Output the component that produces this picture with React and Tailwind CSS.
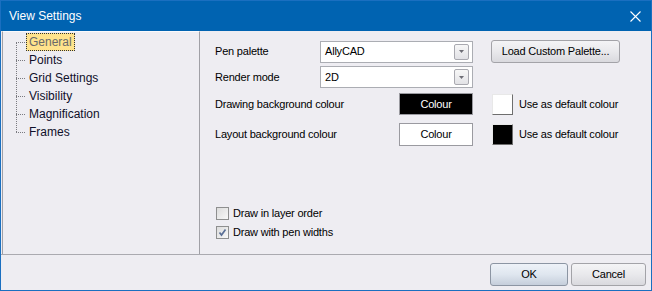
import React from 'react';

const treeItems = ['General', 'Points', 'Grid Settings', 'Visibility', 'Magnification', 'Frames'];

function Combo({ value }) {
  return (
    <div className="w-[153px] h-[22px] bg-white border border-[#abadb3] flex items-center pl-[4px] pr-[3px]">
      <span className="flex-1">{value}</span>
      <div className="w-[15px] h-[16px] rounded-[2px] border border-[#a9a9b0] bg-gradient-to-b from-[#f7f7f7] to-[#e2e2e6] flex items-center justify-center">
        <svg width="5" height="3" viewBox="0 0 5 3">
          <path d="M0 0h5L2.5 3z" fill="#6d6d75" />
        </svg>
      </div>
    </div>
  );
}

function Button({ children, className = '' }) {
  return (
    <div className={`h-[23px] rounded-[3px] border border-[#a3a3a8] bg-gradient-to-b from-[#f4f4f6] via-[#e9e9ec] to-[#d9d9de] flex items-center justify-center ${className}`}>
      {children}
    </div>
  );
}

function Swatch({ color }) {
  return (
    <div className={`w-[21px] h-[21px] border border-t-[#e8e8e8] border-l-[#e8e8e8] border-r-[#6e6e6e] border-b-[#6e6e6e] ${color}`} />
  );
}

function Checkbox({ checked, label }) {
  return (
    <div className="flex items-center h-[19px]">
      <div className="w-[13px] h-[13px] border border-[#8e8f8f] bg-gradient-to-br from-[#dcdcdc] to-[#f8f8f8] flex items-center justify-center">
        {checked && (
          <svg width="9" height="9" viewBox="0 0 9 9">
            <path d="M1.5 4.5l2 2.5 4-5.5" stroke="#5a6f96" strokeWidth="1.7" fill="none" />
          </svg>
        )}
      </div>
      <span className="ml-[4px]">{label}</span>
    </div>
  );
}

export default function App() {
  return (
    <div
      className="w-[652px] h-[291px] border border-[#1a6fc0] bg-[#eeedf2] flex flex-col text-[11px] tracking-[-0.2px] text-black"
      style={{ fontFamily: '"Liberation Sans", Arial, sans-serif' }}
    >
      {/* title bar */}
      <div className="h-[30px] bg-[#0063b1] flex items-center pl-[8px] pr-[10px] text-white text-[12px] tracking-normal">
        <span className="flex-1">View Settings</span>
        <svg width="11" height="11" viewBox="0 0 11 11">
          <path d="M0.5 0.5l10 10M10.5 0.5l-10 10" stroke="#fff" strokeWidth="1.1" />
        </svg>
      </div>

      <div className="flex h-[224px] border-b border-[#aaaab0]">
        {/* tree */}
        <div className="ml-[1px] w-[198px] border-l border-r border-[#a0a0a6] border-t border-t-[#fafafc] pt-[1px] text-[12px] tracking-normal">
          <div className="relative">
            <div className="absolute left-[13px] top-[9px] h-[90px] border-l border-dotted border-[#7a7a80]" />
            {treeItems.map((item, i) => (
              <div key={item} className="flex items-center h-[18px]">
                <span className="ml-[13px] w-[9px] border-t border-dotted border-[#7a7a80]" />
                <span
                  className={
                    i === 0
                      ? 'ml-[1px] h-[18px] px-[2px] flex items-center bg-[#ffe38c] border border-dotted border-[#333] text-[#6a6a6a]'
                      : 'ml-[4px] text-[#10102a]'
                  }
                >
                  {item}
                </span>
              </div>
            ))}
          </div>
        </div>

        {/* settings */}
        <div className="flex-1 flex flex-col pl-[15px] pt-[9px]">
          <div className="flex items-center">
            <span className="w-[105px]">Pen palette</span>
            <Combo value="AllyCAD" />
            <Button className="ml-[18px] w-[129px]">Load Custom Palette...</Button>
          </div>
          <div className="flex items-center mt-[3px]">
            <span className="w-[105px]">Render mode</span>
            <Combo value="2D" />
          </div>
          <div className="flex items-center mt-[5px]">
            <span className="w-[184px]">Drawing background colour</span>
            <div className="w-[74px] h-[22px] bg-black border border-[#9a9aa0] text-white flex items-center justify-center">Colour</div>
            <div className="ml-[19px]"><Swatch color="bg-white" /></div>
            <span className="ml-[6px]">Use as default colour</span>
          </div>
          <div className="flex items-center mt-[8px]">
            <span className="w-[184px]">Layout background colour</span>
            <div className="w-[74px] h-[23px] bg-white border border-[#9a9aa0] flex items-center justify-center">Colour</div>
            <div className="ml-[19px]"><Swatch color="bg-black" /></div>
            <span className="ml-[6px]">Use as default colour</span>
          </div>
          <div className="mt-[58px] pl-[1px]">
            <Checkbox label="Draw in layer order" />
            <Checkbox checked label="Draw with pen widths" />
          </div>
        </div>
      </div>

      {/* buttons */}
      <div className="flex justify-end gap-[3px] pt-[8px] pr-[5px]">
        <div className="w-[78px] h-[23px] rounded-[3px] border border-[#8c95a3] bg-gradient-to-b from-[#eef2f8] via-[#dfe6ef] to-[#c5cedb] flex items-center justify-center">OK</div>
        <Button className="w-[75px]">Cancel</Button>
      </div>
    </div>
  );
}
